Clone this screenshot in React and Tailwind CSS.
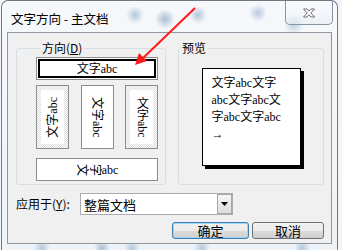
import React from 'react';

function DitherBox({ children }) {
  // dotted ring around a white centre, like the hover state in the dialog
  return (
    <div className="w-[33px] h-[64px] border border-[#8c8c8c] p-[4px] bg-[repeating-conic-gradient(#dcdcdc_0_25%,#ffffff_0_50%)] bg-[length:2px_2px]">
      <div className="w-full h-full bg-white flex items-center justify-center">{children}</div>
    </div>
  );
}

function WinButton({ label, primary, width }) {
  return (
    <button
      className={
        'h-[17px] rounded-[3px] border flex items-center justify-center text-[13px] leading-none text-black bg-[linear-gradient(#f2f2f2_0%,#ebebeb_50%,#dddddd_50%,#cfcfcf_100%)] ' +
        (primary ? 'border-[#3c7fb1] shadow-[inset_0_0_0_1px_#9fd6f5] ' : 'border-[#707070] ') +
        width
      }
    >
      {label}
    </button>
  );
}

export default function App() {
  return (
    <div className="relative w-[342px] h-[250px] overflow-hidden bg-[#f3f6f9] font-['Noto_Sans_CJK_SC','Noto_Sans',sans-serif]">
      {/* window frame with glass background */}
      <div className="ml-[1px] w-[337px] h-[250px] rounded-t-[7px] border border-b-0 border-[#6f7a86] flex flex-col bg-[radial-gradient(circle_at_133px_14px,#b4c8dc_0,transparent_9px),radial-gradient(circle_at_163px_18px,#a9bfd5_0,transparent_10px),radial-gradient(circle_at_196px_14px,#b4c8dc_0,transparent_9px),radial-gradient(circle_at_256px_12px,#b8cbe0_0,transparent_9px),radial-gradient(circle_at_292px_24px,#c3d3e4_0,transparent_10px),radial-gradient(circle_at_40px_247px,#b4c8dc_0,transparent_8px),radial-gradient(circle_at_100px_247px,#a9bfd5_0,transparent_8px),radial-gradient(circle_at_130px_247px,#b4c8dc_0,transparent_8px),radial-gradient(circle_at_200px_247px,#b4c8dc_0,transparent_8px),radial-gradient(circle_at_300px_247px,#b4c8dc_0,transparent_8px),linear-gradient(#f6f8fb,#eef3f8)]">
        {/* title bar */}
        <div className="h-[31px] flex items-start justify-between pl-[9px]">
          <span className="mt-[9px] text-[12.5px] leading-[17px] text-black">文字方向 - 主文档</span>
          <div className="mr-[4px] w-[48px] h-[24px] rounded-b-[5px] border border-t-0 border-[#8793a0] bg-[linear-gradient(rgba(255,255,255,0.5),rgba(230,236,243,0.6))] flex items-center justify-center">
            <svg width="14" height="10" viewBox="0 0 14 10">
              <path
                d="M1.5 1 L5 1 L7 3.2 L9 1 L12.5 1 L8.8 5 L12.5 9 L9 9 L7 6.8 L5 9 L1.5 9 L5.2 5 Z"
                fill="#ffffff"
                stroke="#6d6d6d"
                strokeWidth="1"
                strokeLinejoin="round"
              />
            </svg>
          </div>
        </div>

        {/* dialog body */}
        <div className="mx-[5px] h-[212px] border border-[#8d97a2] bg-[#f0f0f0] pt-[8px] pl-[8px] pr-[7px] text-[12px] text-black">
          <div className="flex gap-[12px]">
            <fieldset className="w-[150px] h-[144px] border border-[#d5dfe5] rounded-[3px] pl-[19px] pt-[2px]">
              <legend className="ml-[4px] px-[2px] leading-[14px]">
                方向(<span className="underline">D</span>)
              </legend>
              <div className="w-[122px] flex flex-col">
                <div className="h-[23px] border border-[#8c8c8c] bg-white p-[1px]">
                  <div className="h-full border-2 border-black flex items-center justify-center text-[12px] leading-none font-['Liberation_Serif','Noto_Sans_CJK_SC',serif]">
                    文字abc
                  </div>
                </div>
                <div className="mt-[5px] flex justify-between">
                  <DitherBox>
                    <span className="[writing-mode:vertical-rl] [text-orientation:sideways] rotate-180 text-[12px] leading-none font-['Liberation_Serif','Noto_Sans_CJK_SC',serif]">
                      文字abc
                    </span>
                  </DitherBox>
                  <div className="w-[33px] h-[64px] border border-[#8c8c8c] bg-white flex items-center justify-center">
                    <span className="[writing-mode:vertical-rl] [text-orientation:sideways] text-[12px] leading-none font-['Liberation_Serif','Noto_Sans_CJK_SC',serif]">
                      文字abc
                    </span>
                  </div>
                  <DitherBox>
                    <span className="[writing-mode:vertical-rl] text-[12px] leading-none font-['Liberation_Serif','Noto_Sans_CJK_SC',serif]">
                      文字abc
                    </span>
                  </DitherBox>
                </div>
                <div className="mt-[9px] h-[23px] border border-[#8c8c8c] bg-white flex items-center justify-center gap-[1px] text-[12px] leading-none font-['Liberation_Serif','Noto_Sans_CJK_SC',serif]">
                  <span className="block w-[12px] h-[12px] rotate-90">文</span>
                  <span className="block w-[12px] h-[12px] rotate-90">字</span>
                  <span className="block">abc</span>
                </div>
              </div>
            </fieldset>

            <fieldset className="w-[146px] h-[144px] border border-[#d5dfe5] rounded-[3px] pt-[13px]">
              <legend className="ml-[1px] px-[2px] leading-[14px]">预览</legend>
              <div className="mx-auto w-[99px] h-[98px] border border-black bg-white shadow-[3px_3px_0_0_#000] pl-[9px] pt-[6px] text-[12px] leading-[17px] font-['Liberation_Serif','Noto_Sans_CJK_SC',serif]">
                <div>文字abc文字</div>
                <div>abc文字abc文</div>
                <div>字abc文字abc</div>
                <div>→</div>
              </div>
            </fieldset>
          </div>

          {/* apply to */}
          <div className="mt-[8px] flex items-center">
            <span className="w-[64px] leading-none">
              应用于(<span className="underline">Y</span>):
            </span>
            <div className="w-[153px] h-[22px] border border-[#abadb3] bg-white flex items-center justify-between pl-[3px]">
              <span className="text-[13px] leading-none">整篇文档</span>
              <div className="w-[15px] h-[20px] border border-[#a8a8a8] bg-[linear-gradient(#f6f6f6,#dcdcdc)] flex items-center justify-center">
                <svg width="7" height="4" viewBox="0 0 7 4">
                  <path d="M0 0 H7 L3.5 4 Z" fill="#000" />
                </svg>
              </div>
            </div>
          </div>

          {/* buttons */}
          <div className="mt-[7px] flex justify-end gap-[3px]">
            <WinButton label="确定" primary width="w-[77px]" />
            <WinButton label="取消" width="w-[72px]" />
          </div>
        </div>
      </div>

      {/* red annotation arrow */}
      <svg className="absolute left-0 top-0 pointer-events-none" width="342" height="250" viewBox="0 0 342 250">
        <line x1="195" y1="8" x2="141" y2="60" stroke="#ff1a1a" strokeWidth="2" />
        <path d="M135 65 L147 61 L139 53 Z" fill="#ff1a1a" />
      </svg>
    </div>
  );
}
